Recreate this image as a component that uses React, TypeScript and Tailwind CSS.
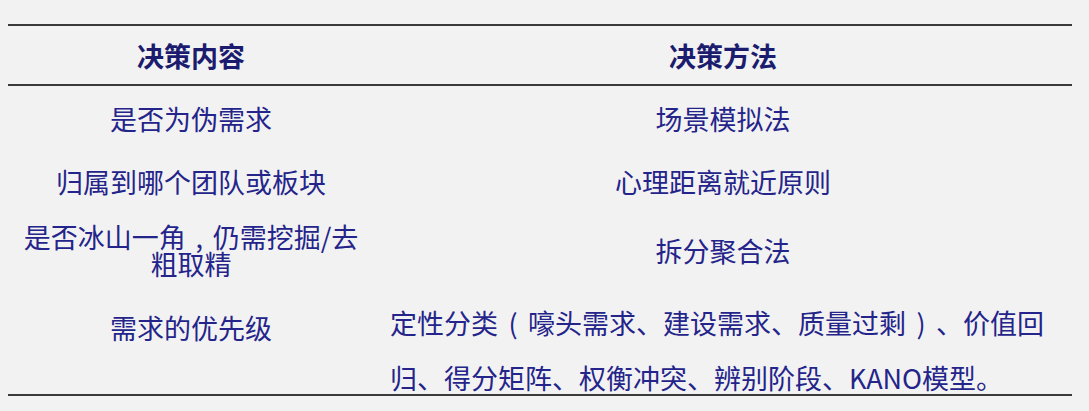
const rows = [
  { left: <>是否为伪需求</>, right: "场景模拟法" },
  { left: <>归属到哪个团队或板块</>, right: "心理距离就近原则" },
  {
    left: (
      <>
        是否冰山一角
        <span className="inline-block w-[27px] text-center">,</span>
        仍需挖掘/去粗取精
      </>
    ),
    right: "拆分聚合法",
  },
];

function Paren({ ch }: { ch: string }) {
  return <span className="inline-block w-[30px] text-center">{ch}</span>;
}

export default function App() {
  return (
    <div
      className="w-[1089px] h-[411px] bg-[#f2f2f2] pl-[8px] pt-[24px] overflow-hidden [text-spacing-trim:space-all]"
      style={{ fontFamily: '"Noto Sans CJK SC", "Noto Sans", sans-serif' }}
    >
      <div className="w-[1064px] border-t-2 border-b-2 border-[#3a3a3a] text-[27px] text-[#24248a]">
        <div className="grid grid-cols-[366px_698px] h-[60px] items-center border-b-2 border-[#3a3a3a] font-bold text-[#1c1c6e] leading-none">
          <div className="text-center">决策内容</div>
          <div className="text-center">决策方法</div>
        </div>

        {rows.map((r, i) => (
          <div
            key={i}
            className={`grid grid-cols-[366px_698px] items-center ${
              i === 0 ? "h-[64px]" : i === 1 ? "h-[62px]" : "h-[76px]"
            }`}
          >
            <div className="text-center px-2 leading-[27px]">{r.left}</div>
            <div className="text-center leading-[27px]">{r.right}</div>
          </div>
        ))}

        <div className="grid grid-cols-[366px_698px] h-[106px] items-start">
          <div className="text-center px-2 pt-[26px] leading-[27px]">需求的优先级</div>
          <div className="pl-[16px] pr-[12px] pt-[7px] leading-[55px] h-[106px]">
            定性分类<Paren ch="(" />嚎头需求、建设需求、质量过剩<Paren ch=")" />、价值回归、得分矩阵、权衡冲突、辨别阶段、KANO模型。
          </div>
        </div>
      </div>
    </div>
  );
}
